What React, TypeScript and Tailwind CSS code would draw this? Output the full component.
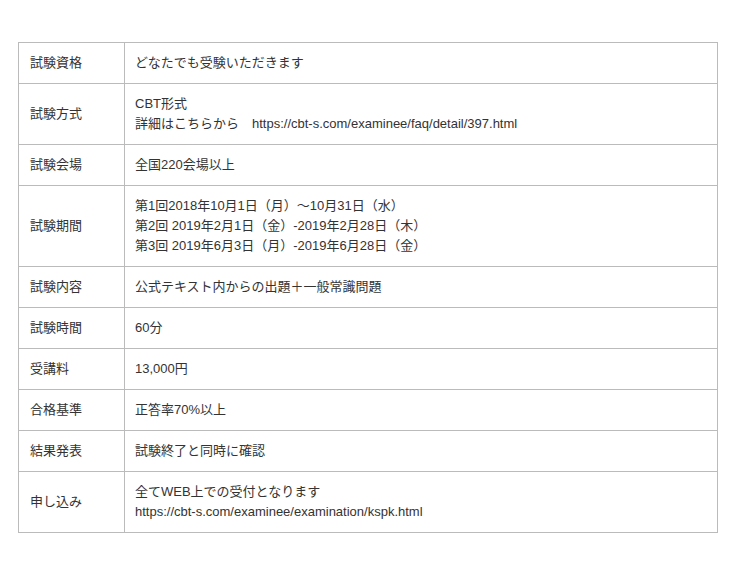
import React from "react";

const rows: { label: string; lines: string[] }[] = [
  { label: "試験資格", lines: ["どなたでも受験いただきます"] },
  { label: "試験方式", lines: ["CBT形式", "詳細はこちらから　https://cbt-s.com/examinee/faq/detail/397.html"] },
  { label: "試験会場", lines: ["全国220会場以上"] },
  {
    label: "試験期間",
    lines: [
      "第1回2018年10月1日（月）～10月31日（水）",
      "第2回 2019年2月1日（金）-2019年2月28日（木）",
      "第3回 2019年6月3日（月）-2019年6月28日（金）",
    ],
  },
  { label: "試験内容", lines: ["公式テキスト内からの出題＋一般常識問題"] },
  { label: "試験時間", lines: ["60分"] },
  { label: "受講料", lines: ["13,000円"] },
  { label: "合格基準", lines: ["正答率70%以上"] },
  { label: "結果発表", lines: ["試験終了と同時に確認"] },
  { label: "申し込み", lines: ["全てWEB上での受付となります", "https://cbt-s.com/examinee/examination/kspk.html"] },
];

export default function App() {
  return (
    <div
      className="w-[740px] h-[573px] bg-white pt-[42px] pl-[18px] text-[#333] text-[13px] leading-[20px]"
      style={{ fontFamily: '"Liberation Sans", "Noto Sans CJK JP", sans-serif' }}
    >
      <table className="w-[700px] border-collapse">
        <tbody>
          {rows.map((r) => (
            <tr key={r.label}>
              <td className="w-[106px] border border-[#bbb] pl-[11px] pr-2 py-[10px] align-middle">
                {r.label}
              </td>
              <td className="border border-[#bbb] pl-[10px] pr-2 py-[10px] align-middle">
                {r.lines.map((l, i) => (
                  <div key={i} className="whitespace-pre">
                    {l}
                  </div>
                ))}
              </td>
            </tr>
          ))}
        </tbody>
      </table>
    </div>
  );
}
